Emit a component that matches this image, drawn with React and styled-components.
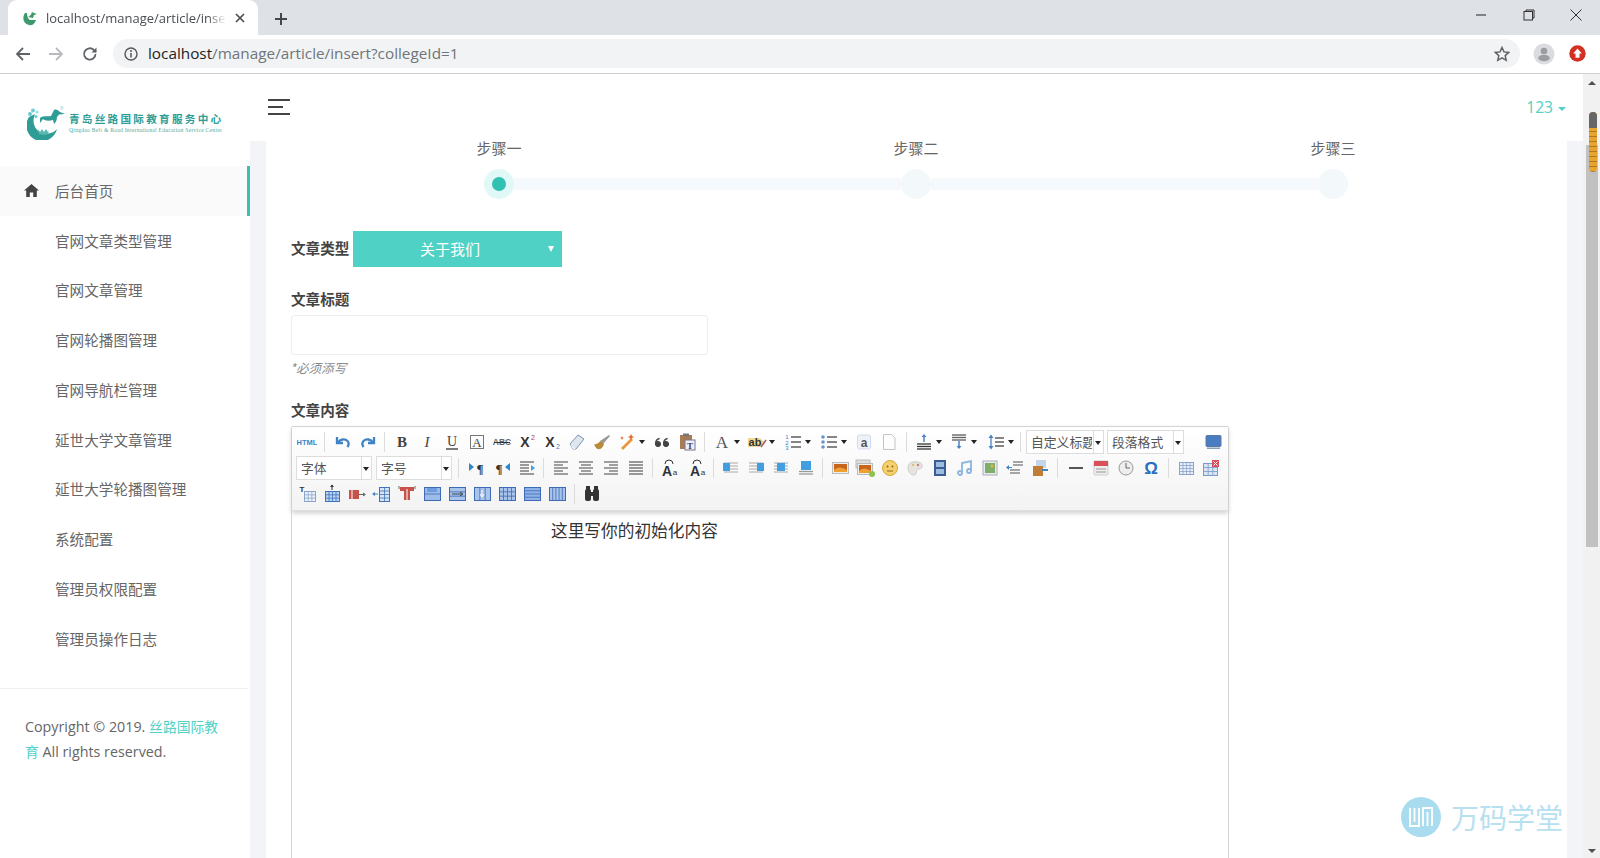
import React from "react";
import styled, { createGlobalStyle } from "styled-components";

const CJK = `"Noto Sans CJK SC", "Noto Sans", sans-serif`;
const LATIN = `"Open Sans", "Noto Sans CJK SC", sans-serif`;

const Global = createGlobalStyle`
  html, body { margin: 0; padding: 0; height: 858px; overflow: hidden; background: #fff; }
  * { box-sizing: border-box; }
`;

const Shell = styled.div`
  width: 1600px; height: 858px; display: flex; flex-direction: column; overflow: hidden;
  font-family: ${CJK}; position: relative; color: #555;
`;

/* ---------- browser chrome ---------- */
const TabStrip = styled.div`
  height: 35px; background: #dee1e6; display: flex; align-items: flex-end; padding-left: 8px; flex: none;
`;
const Tab = styled.div`
  width: 250px; height: 35px; background: #fff; border-radius: 9px 9px 0 0; display: flex; align-items: center;
  padding: 0 0 0 14px; font: 13px ${LATIN}; color: #4a4d52;
`;
const TabTitle = styled.div`
  margin-left: 8px; width: 180px; height: 20px; line-height: 20px; overflow: hidden; white-space: nowrap;
  -webkit-mask-image: linear-gradient(90deg, #000 90%, transparent 100%);
`;
const TabClose = styled.div`margin-left: 8px; display: flex;`;
const NewTab = styled.div`margin: 0 0 9px 16px; display: flex;`;
const WindowBtns = styled.div`
  margin-left: auto; align-self: flex-start; display: flex; height: 30px; align-items: center; padding-right: 0;
`;
const WinBtn = styled.div`width: 47.5px; display: flex; justify-content: center;`;

const NavBar = styled.div`
  height: 39px; background: #fff; border-bottom: 1px solid #cfcfcf; display: flex; align-items: center; padding: 0 0 1px 6px; flex: none;
`;
const NavBtn = styled.div`width: 33.5px; display: flex; justify-content: center;`;
const Omnibox = styled.div`
  width: 1407px; height: 29px; margin-left: 6.5px; border-radius: 15px; background: #f1f3f4; display: flex; align-items: center;
  padding: 0 10px 0 11px; font: 15.3px ${LATIN}; color: #70757a;
`;
const UrlHost = styled.span`color: #222;`;
const UrlText = styled.div`margin-left: 10px; flex: 1; white-space: nowrap; padding-bottom: 2px;`;
const Avatar = styled.div`margin-left: 13px; display: flex;`;
const Ext = styled.div`margin-left: 14px; display: flex;`;

/* ---------- page ---------- */
const Page = styled.div`flex: 1; display: flex; min-height: 0;`;
const Sidebar = styled.aside`
  width: 250px; flex: none; background: #fff; display: flex; flex-direction: column;
`;
const LogoBox = styled.div`
  height: 92px; display: flex; align-items: flex-start; padding: 32px 0 0 27px; gap: 4px;
`;
const LogoWords = styled.div`display: flex; flex-direction: column; margin: 6px 0 0 0; width: 153px;`;
const LogoCn = styled.div`
  font: 700 10.6px/14px ${CJK}; letter-spacing: 2.28px; color: #2f9d95; white-space: nowrap;
`;
const LogoEn = styled.div`
  font: 5.6px/8px "Liberation Serif", serif; color: #4fa9a3; white-space: nowrap; letter-spacing: .27px;
`;
const NavList = styled.nav`display: flex; flex-direction: column;`;
const NavItem = styled.div`
  height: 49.75px; display: flex; align-items: center; padding: 0 0 1px ${p => (p.$icon ? 24 : 55)}px; gap: 16px; font-size: 14.6px;
  color: #666; background: ${p => (p.$active ? "#fafafa" : "transparent")};
  border-right: 3px solid ${p => (p.$active ? "#3bc0b0" : "transparent")};
`;
const SideFoot = styled.div`
  margin: 24.5px 2px 0 0; border-top: 1px solid #f0f0f3; padding: 25px 25px 0; font: 14.3px/25px ${LATIN}; color: #666;
`;
const Teal = styled.span`color: #4fd1c5; font-size: 13.8px;`;

const Main = styled.main`flex: 1; display: flex; flex-direction: column; min-width: 0;`;
const Header = styled.header`
  height: 67px; background: #fff; flex: none; display: flex; align-items: center; justify-content: space-between; padding: 0 17px 1px 18px;
`;
const UserMenu = styled.div`
  font: 15.6px ${LATIN}; color: #4fd1c5; display: flex; align-items: center; gap: 5px;
`;
const Caret = styled.i`
  width: 0; height: 0; border: 4px solid transparent; border-top-color: currentColor; border-bottom: 0; display: block; margin-top: 3px;
`;
const Gutter = styled.div`
  flex: 1; background: #f3f4f8; padding: 0 16px; min-height: 0; overflow: hidden;
`;
const Card = styled.div`
  background: #fff; height: 100%; padding: 0 25px; overflow: hidden;
`;
const Steps = styled.div`
  display: grid; grid-template-columns: 30px 387px 30px 387px 30px; row-gap: 14px; margin-left: 193px; align-items: center;
`;
const StepLabel = styled.div`
  grid-column: ${p => p.$col}; justify-self: center; white-space: nowrap; font-size: 15px; line-height: 14px; color: #666;
`;
const Dot = styled.div`
  width: 30px; height: 30px; border-radius: 50%; background: ${p => (p.$on ? "#e0f8f6" : "#f3f8fb")};
  display: flex; align-items: center; justify-content: center; grid-row: 2;
  &::after { content: ""; width: 14px; height: 14px; border-radius: 50%; background: ${p => (p.$on ? "#2fc1b1" : "transparent")}; }
`;
const Seg = styled.div`height: 12px; background: #f5f9fc; grid-row: 2;`;

const TypeRow = styled.div`display: flex; align-items: center; gap: 4px; margin-top: 32px;`;
const Label = styled.div`font-weight: 700; font-size: 14.6px; line-height: 20px; color: #444;`;
const TypeLabel = styled(Label)`padding-bottom: 3px;`;
const Select = styled.div`
  width: 209px; height: 36px; background: #4fd1c5; color: #fff; font-size: 15px; display: flex; align-items: center; justify-content: center;
  padding: 0 16px 2px 0; position: relative;
  &::after { content: ""; position: absolute; right: 8px; top: 15px; border: 3.5px solid transparent; border-top: 6px solid #fff; border-bottom: 0; }
`;
const TitleLabel = styled(Label)`margin-top: 22px;`;
const TextBox = styled.div`
  width: 417px; height: 40px; margin-top: 6px; border: 1px solid #eee; border-radius: 3px;
`;
const Hint = styled.div`font-size: 12.6px; font-style: italic; color: #8a8a8a; line-height: 18px; margin: 4px 0 0 -1px;`;
const ContentLabel = styled(Label)`margin-top: 23px;`;

const Editor = styled.div`
  width: 938px; margin-top: 6px; border: 1px solid #d4d4d4; border-radius: 2px 2px 0 0; height: 500px;
`;
const Toolbar = styled.div`
  height: 84px; padding: 2px 0 0 2px; background: linear-gradient(#ffffff, #f3f3f3);
  border-bottom: 1px solid #dfdfdf; box-shadow: 0 2px 5px #ccc; display: flex; flex-direction: column;
`;
const ToolRow = styled.div`height: 26px; display: flex; align-items: center; flex: none;`;
const ToolBtn = styled.div`
  width: ${p => (p.$arrow ? 35 : 25)}px; height: 22px; flex: none; display: flex; align-items: center; padding-left: 2.5px; position: relative;
`;
const ToolArrow = styled.i`
  position: absolute; left: 25px; top: 9px; border: 3px solid transparent; border-top: 4px solid #222; border-bottom: 0; display: block;
`;
const ToolSep = styled.div`
  width: ${p => p.$w}px; flex: none; height: 20px; display: flex; justify-content: center;
  &::after { content: ""; width: 1px; height: 100%; background: #dcdcdc; }
`;
const ToolSelect = styled.div`
  width: ${p => p.$w}px; margin-left: ${p => p.$ml}px; height: 24px; flex: none; border: 1px solid #ddd; background: #fff; font-size: 12.8px; color: #555;
  display: flex; align-items: center; padding: 0 11px 1px 4px; position: relative; white-space: nowrap;
  &::after { content: ""; position: absolute; right: 2px; top: 10px; border: 3px solid transparent; border-top: 4px solid #222; border-bottom: 0; }
  &::before { content: ""; position: absolute; right: 9px; top: 0; bottom: 0; width: 1px; background: #ddd; }
`;
const ToolSelectText = styled.span`display: block; overflow: hidden; width: 100%;`;
const Spacer = styled.div`width: ${p => p.$w}px; flex: none;`;
const EditorBody = styled.div`
  padding: 7px 0 0 259px; font-size: 16.7px; line-height: 24px; color: #333;
`;

const ScrollBar = styled.div`
  width: 17px; flex: none; background: #f1f1f1; display: flex; flex-direction: column; align-items: center; position: relative;
`;
const ScrollThumb = styled.div`width: 12px; height: 402px; margin-top: 60px; background: #c1c1c1;`;
const ArrowUp = styled.i`
  display: block; margin-top: 7px; border: 4px solid transparent; border-bottom: 4px solid #505050; border-top: 0; height: 0; width: 0;
`;
const ArrowDown = styled.i`
  display: block; margin-top: auto; margin-bottom: 5px; border: 4px solid transparent; border-top: 4px solid #505050; border-bottom: 0; height: 0; width: 0;
`;
const ScrollMark = styled.div`
  position: absolute; left: 6px; top: 38px; width: 8px; height: 60px; border-radius: 4px; overflow: hidden;
  background: repeating-linear-gradient(#e9a42f 0 4px, #a8782d 4px 5px);
  &::before { content: ""; display: block; height: 16px; background: #666; }
`;
const Watermark = styled.div`
  position: absolute; left: 1401px; top: 797px; display: flex; align-items: center; gap: 10px;
  font-size: 28px; line-height: 40px; color: #b7e1f0; pointer-events: none;
`;

/* ---------- icons ---------- */
const Svg = ({ s = 20, children, vb }) => (
  <svg width={s} height={s} viewBox={vb || `0 0 ${s} ${s}`} fill="none" style={{ display: "block" }}>{children}</svg>
);
const Txt = ({ x = 10, y = 15, size = 14, f = "Liberation Serif", w = "400", c = "#444", st, d }) => (
  <text x={x} y={y} fontSize={size} fontFamily={f} fontWeight={w} fill={c} fontStyle={st} textAnchor="middle">{d}</text>
);
const Lines = ({ ys, x1 = 3, x2 = 17, c = "#777", w = 1.3 }) => ys.map((y, i) => {
  const a = Array.isArray(x1) ? x1[i] : x1;
  const z = Array.isArray(x2) ? x2[i] : x2;
  return <path key={i} d={`M${a} ${y}H${z}`} stroke={c} strokeWidth={w} />;
});
const Grid = ({ x = 3, y = 4, w = 14, h = 12, r = 3, c = 4, fill = "#cfdff5", line = "#5d88c6", children }) => (
  <g>
    <rect x={x + .5} y={y + .5} width={w} height={h} fill={fill} stroke={line} />
    {Array.from({ length: r - 1 }, (_, i) => <path key={"r" + i} d={`M${x} ${y + .5 + (h * (i + 1)) / r}H${x + w}`} stroke={line} strokeWidth=".8" />)}
    {Array.from({ length: c - 1 }, (_, i) => <path key={"c" + i} d={`M${x + .5 + (w * (i + 1)) / c} ${y}V${y + h}`} stroke={line} strokeWidth=".8" />)}
    {children}
  </g>
);
const Photo = ({ x = 3, y = 5, w = 15, h = 10 }) => (
  <g>
    <rect x={x - .5} y={y - .5} width={w + 1} height={h + 1} fill="#eee" stroke="#bbb" />
    <rect x={x + 1} y={y + 1} width={w - 2} height={h - 2} fill="#c8641c" />
    <path d={`M${x + 1} ${y + h - 3}q${w / 3} -5 ${w - 2} 0v2h-${w - 2}z`} fill="#f0a030" />
  </g>
);
const Wrap = ({ x, bw = 7 }) => (
  <g>
    <Lines ys={[5, 8, 11, 14]} x1={3} x2={17} c="#aaa" w="1" />
    <rect x={x} y={5} width={bw} height={8} fill="#3f9fe0" />
  </g>
);
const Blue = "#3f83c6";

const ICONS = {
  html: <Txt y={13} size={7.5} f="Liberation Sans" w="700" c="#3f83c6" d="HTML" />,
  undo: <g stroke={Blue} strokeWidth="2.3"><path d="M4 5v6h6" /><path d="M5 10.5C7 7 12 6.5 14.5 9c1.5 1.6 1.3 4 0 6" /></g>,
  redo: <g stroke={Blue} strokeWidth="2.3"><path d="M16 5v6h-6" /><path d="M15 10.5C13 7 8 6.5 5.5 9 4 10.6 4.2 13 5.5 15" /></g>,
  bold: <Txt w="700" size={15} d="B" />,
  italic: <Txt size={15} st="italic" d="I" />,
  underline: <g><Txt size={14} y={14} d="U" /><path d="M4 17h12" stroke="#333" strokeWidth="1.3" /></g>,
  border: <g><rect x="3.5" y="3.5" width="13" height="13" stroke="#777" /><Txt size={13} y={15} d="A" /></g>,
  strike: <g><Txt size={8.5} y={13} f="Liberation Sans" w="700" c="#666" d="ABC" /><path d="M2 10.5h16" stroke="#333" /></g>,
  sup: <g><Txt x={8} size={14} f="Liberation Sans" w="700" c="#333" d="X" /><Txt x={16} y={8} size={7} f="Liberation Sans" c="#c04040" d="2" /></g>,
  sub: <g><Txt x={8} size={14} f="Liberation Sans" w="700" c="#333" d="X" /><Txt x={16} y={17} size={7} f="Liberation Sans" c={Blue} d="2" /></g>,
  eraser: <g><path d="M3 12l8-9 6 4-8 10H6z" fill="#dfe6ee" stroke="#7a94b5" /><path d="M3 12l4 3.5 2 1.5H6z" fill="#f0f4f8" /></g>,
  brush: <g><path d="M8 9l9-6 1 1-7 8z" fill="#999" /><path d="M2 12c3 1 5-2 7-3l3 3c-1 3-3 6-6 5-2 0-3-3-4-5z" fill="#b88a3c" /></g>,
  wand: <g><path d="M4 16L14 6l2 2L6 18z" fill="#e9973c" /><path d="M14 2l1 2 2 1-2 1-1 2-1-2-2-1 2-1zM5 4l.7 1.5L7 6l-1.3.6L5 8l-.7-1.4L3 6l1.3-.5z" fill="#e06c2c" /></g>,
  quote: <g fill="#444" stroke="#444"><circle cx="6" cy="12" r="2.6" /><circle cx="14" cy="12" r="2.6" /><path d="M3.6 12c0-3 1.4-5 4-5.5M11.6 12c0-3 1.4-5 4-5.5" fill="none" strokeWidth="1.4" /></g>,
  paste: <g><rect x="3" y="3" width="12" height="14" fill="#a87b52" /><rect x="6" y="1.5" width="6" height="3" fill="#777" /><rect x="8" y="8" width="10" height="10" fill="#eef" stroke="#778" /><Txt x={13} y={16.5} size={9} w="700" d="T" /></g>,
  color: <Txt y={16} size={17} c="#555" d="A" />,
  bg: <g><path d="M1 6h12l4 4-4 5H1z" fill="#f2d892" /><Txt x={8} y={14} size={11} f="Liberation Sans" c="#333" w="700" d="ab" /><path d="M14 15l5-7" stroke="#a56" strokeWidth="1.5" /></g>,
  ol: <g><Txt x={4} y={7} size={6} f="Liberation Sans" c={Blue} d="1" /><Txt x={4} y={12.5} size={6} f="Liberation Sans" c={Blue} d="2" /><Txt x={4} y={18} size={6} f="Liberation Sans" c={Blue} d="3" /><Lines ys={[5, 10, 15]} x1={8} x2={18} c="#444" /></g>,
  ul: <g><circle cx="4" cy="5" r="1.8" fill="#6c93cc" /><circle cx="4" cy="10" r="1.8" fill="#6c93cc" /><circle cx="4" cy="15" r="1.8" fill="#6c93cc" /><Lines ys={[5, 10, 15]} x1={8} x2={18} c="#444" /></g>,
  anchor: <g><rect x="3.5" y="3" width="13" height="14" rx="2" fill="#edf1f8" stroke="#d3dcec" /><Txt y={14.5} size={12} f="Liberation Sans" w="700" c="#555" d="a" /></g>,
  page: <path d="M4.5 2.5h8l3.5 3.5v11.5H4.5z" fill="#fdfdfd" stroke="#c4c4c4" />,
  rowspace: <g><Lines ys={[12, 14.5, 17]} x1={3} x2={17} c="#333" /><path d="M10 3v7" stroke="#4b82c3" strokeWidth="1.5" /><path d="M7.5 5L10 2l2.5 3z" fill="#4b82c3" /></g>,
  rowbot: <g><Lines ys={[3, 5.5, 8]} x1={3} x2={17} c="#666" w="1.4" /><path d="M10 9v7" stroke="#4b82c3" strokeWidth="1.5" /><path d="M7.5 14l2.5 3 2.5-3z" fill="#4b82c3" /></g>,
  lh: <g><Lines ys={[6, 10, 14]} x1={9} x2={18} c="#444" /><path d="M5 4v12" stroke="#4b82c3" strokeWidth="1.3" /><path d="M2.5 6L5 2.5 7.5 6zM2.5 14L5 17.5 7.5 14z" fill="#4b82c3" /></g>,
  preview: <g><rect x="3" y="3.5" width="15" height="11" rx="1" fill="#4a7cc0" stroke="#5a7ba5" /><path d="M4 15.5h13v1.5H4z" fill="#8aa0bd" /></g>,
  ltr: <g><path d="M2 5l5 4-5 4z" fill="#2e86cf" /><Txt x={13} y={15} size={13} w="700" c="#333" d="¶" /></g>,
  rtl: <g><Txt x={7} y={15} size={13} w="700" c="#333" d="¶" /><path d="M18 5l-5 4 5 4z" fill="#2e86cf" /></g>,
  indent: <g><Lines ys={[4, 7, 10, 13, 16]} x1={3} x2={[17, 12, 12, 12, 17]} c="#666" /><path d="M14 7l4 3-4 3z" fill="#3f9fe0" /></g>,
  left: <Lines ys={[4, 7, 10, 13, 16]} x1={3} x2={[17, 12, 17, 12, 17]} c="#777" w="1.4" />,
  center: <Lines ys={[4, 7, 10, 13, 16]} x1={[3, 5, 3, 5, 3]} x2={[17, 15, 17, 15, 17]} c="#777" w="1.4" />,
  right: <Lines ys={[4, 7, 10, 13, 16]} x1={[3, 8, 3, 8, 3]} x2={17} c="#777" w="1.4" />,
  justify: <Lines ys={[4, 7, 10, 13, 16]} x1={3} x2={17} c="#777" w="1.5" />,
  toUpper: <g><Txt x={8} y={18} size={14} f="Liberation Sans" w="700" c="#333" d="A" /><Txt x={16} y={17} size={8} f="Liberation Sans" c="#333" d="a" /><path d="M6 6a4 4 0 018 0" stroke="#333" /></g>,
  img1: <Wrap x={2} bw={7} />,
  img2: <Wrap x={11} bw={7} />,
  img3: <Wrap x={6} bw={8} />,
  img4: <g><rect x="5" y="3" width="10" height="9" fill="#3f9fe0" /><Lines ys={[13.5, 16]} c="#999" /></g>,
  image: <Photo />,
  images: <g><rect x="1" y="2" width="14" height="8" fill="#ddd" stroke="#bbb" /><Photo x={3} y={6} w={14} h={10} /><circle cx="17" cy="16" r="3" fill="#8bc34a" /></g>,
  emoji: <g><circle cx="10" cy="10" r="7.5" fill="#f4cf6b" stroke="#d9a93f" /><circle cx="7.5" cy="8.5" r="1" fill="#8a6a2a" /><circle cx="12.5" cy="8.5" r="1" fill="#8a6a2a" /><path d="M7 13h6" stroke="#8a6a2a" /></g>,
  scrawl: <g><path d="M3 9c0-4 5-6 9-5 4 0 6 3 5 5-1 3-4 1-5 3s0 5-3 5c-4 0-6-4-6-8z" fill="#e6e4dc" stroke="#ccc" /><circle cx="8" cy="7" r="1.2" fill="#d8c27a" /><circle cx="13" cy="7" r="1.2" fill="#c78" /></g>,
  video: <g><rect x="4" y="2" width="12" height="16" fill="#3d5d92" /><rect x="6" y="4" width="8" height="5" fill="#9dbbe0" /><rect x="6" y="11" width="8" height="5" fill="#9dbbe0" /></g>,
  music: <g stroke="#8cb5de" strokeWidth="1.8"><path d="M7 15V5l9-2v10" /><circle cx="5" cy="15" r="2" /><circle cx="14" cy="13" r="2" /></g>,
  attach: <g><rect x="3" y="3" width="14" height="14" fill="#e8ecef" stroke="#aab" /><rect x="5" y="5" width="10" height="10" fill="#7fae6a" /><circle cx="12" cy="8" r="1.5" fill="#e6b93a" /></g>,
  pagebreak: <g><Lines ys={[4, 7]} x1={8} x2={18} c="#777" /><Lines ys={[12, 15]} x1={5} x2={15} c="#777" /><path d="M7 9.5H2" stroke="#3f83c6" /><path d="M4 7L1 9.5 4 12z" fill="#3f83c6" /></g>,
  map: <g><rect x="6" y="2" width="10" height="8" fill="#c4d5ea" /><rect x="3" y="8" width="10" height="10" fill="#c07d35" /><path d="M12 12h6" stroke="#3f83c6" strokeWidth="2" /></g>,
  hr: <path d="M3 10h14" stroke="#555" strokeWidth="2" />,
  date: <g><rect x="3" y="3" width="14" height="14" rx="1" fill="#eee" stroke="#ccc" /><path d="M3 3h14v5H3z" fill="#d9505a" /><Lines ys={[11, 14]} x1={5} x2={15} c="#aaa" /></g>,
  time: <g><circle cx="10" cy="10" r="7" fill="#eee" stroke="#999" /><path d="M10 5v5h4" stroke="#666" /></g>,
  omega: <Txt y={16} size={17} f="Liberation Sans" w="700" c="#2a6fc0" d="Ω" />,
  table: <Grid x={3} y={4} w={14} h={12} r={4} c={4} fill="#e9eff8" line="#8aa4cb" />,
  tableDel: <g><Grid x={2} y={5} w={14} h={12} r={3} c={3} fill="#dbe6f5" line="#7a9bcb" /><rect x="11" y="2" width="7" height="7" fill="#d9505a" /><path d="M12.5 3.5l4 4m0-4l-4 4" stroke="#fff" /></g>,
  cellT: <g><Txt x={5} y={8} size={8} f="Liberation Sans" w="700" c="#333" d="T" /><Grid x={7} y={7} w={11} h={10} r={3} c={3} fill="#eef3fa" line="#8aa4cb" /></g>,
  rowUp: <g><Grid x={3} y={7} w={14} h={10} r={3} c={4} fill="#bcd3f0" line="#3f73bd" /><path d="M10 1v5" stroke="#333" /><path d="M8 3l2-2.5L12 3z" fill="#333" /></g>,
  colSplitR: <g><rect x="2" y="6" width="10" height="9" fill="#c6524a" /><path d="M5 6v9" stroke="#fff" /><path d="M12 10.5h5" stroke="#666" /><path d="M16 8.5l3 2-3 2z" fill="#666" /></g>,
  colLeft: <g><path d="M1 10h5" stroke="#3f83c6" /><path d="M3 8l-3 2 3 2z" fill="#3f83c6" /><Grid x={7} y={3} w={10} h={14} r={4} c={2} fill="#d6e4f6" line="#3f73bd" /></g>,
  delRow: <g><path d="M3 3h14v4h-4v9H7V7H3z" fill="#c6524a" /><path d="M10 5v12" stroke="#fff" /><path d="M2 2v3M18 2v3" stroke="#666" /></g>,
  merge1: <Grid x={2} y={3} w={16} h={13} r={2} c={1} fill="#9dbbe8" line="#3f6ab5"><rect x="5" y="4" width="10" height="4" fill="#6d9ce0" /></Grid>,
  merge2: <Grid x={2} y={3} w={16} h={13} r={3} c={1} fill="#a9c4ea" line="#3f6ab5"><path d="M5 10h10M13 8l3 2-3 2" stroke="#345" /></Grid>,
  merge3: <Grid x={2} y={3} w={16} h={13} r={1} c={3} fill="#a9c4ea" line="#3f6ab5"><path d="M10 6v6M8 10l2 3 2-3" stroke="#fff" /></Grid>,
  split1: <Grid x={2} y={3} w={16} h={13} r={3} c={4} fill="#a9c4ea" line="#3f6ab5" />,
  split2: <Grid x={2} y={3} w={16} h={13} r={4} c={1} fill="#8fb2e6" line="#3f6ab5" />,
  split3: <Grid x={2} y={3} w={16} h={13} r={1} c={5} fill="#a9c4ea" line="#3f6ab5" />,
  find: <g fill="#333"><rect x="3" y="5" width="6" height="12" rx="2" /><rect x="11" y="5" width="6" height="12" rx="2" /><rect x="8" y="8" width="4" height="4" /><rect x="4" y="2" width="4" height="4" /><rect x="12" y="2" width="4" height="4" /></g>,
};
ICONS.toLower = ICONS.toUpper;

const b = (i, arrow) => ({ i, arrow });
const sep = w => ({ sep: w });
const sel = (t, w, ml) => ({ t, w, ml });
const sp = w => ({ sp: w });

const ROW1 = [b("html"), sep(11), b("undo"), b("redo"), sep(9), b("bold"), b("italic"), b("underline"), b("border"), b("strike"), b("sup"), b("sub"),
  b("eraser"), b("brush"), b("wand", 1), b("quote"), b("paste"), sep(10), b("color", 1), sp(-1), b("bg", 1), sp(1), b("ol", 1), sp(1), b("ul", 1), b("anchor"), b("page"), sep(10),
  b("rowspace", 1), b("rowbot", 1), sp(2), b("lh", 1), sep(4), sel("自定义标题", 78, 4), sel("段落格式", 77, 3), sp(16), b("preview")];
const ROW2 = [sel("字体", 76, 2), sel("字号", 76, 4), sep(12), b("ltr"), b("rtl"), b("indent"), sep(9), b("left"), b("center"), b("right"), b("justify"), sep(8),
  b("toUpper"), sp(3), b("toLower"), sep(9), b("img1"), b("img2"), b("img3"), b("img4"), sep(9), b("image"), b("images"), b("emoji"), b("scrawl"), b("video"), b("music"), b("attach"), b("pagebreak"), b("map"), sep(11),
  b("hr"), b("date"), b("time"), b("omega"), sep(10), b("table"), b("tableDel")];
const ROW3 = [b("cellT"), b("rowUp"), b("colSplitR"), b("colLeft"), b("delRow"), b("merge1"), b("merge2"), b("merge3"), b("split1"), b("split2"), b("split3"), sep(10), b("find")];

const Row = ({ items }) => (
  <ToolRow>
    {items.map((it, k) => {
      if (it.sep) return <ToolSep key={k} $w={it.sep} />;
      if (it.sp !== undefined) return <Spacer key={k} $w={it.sp} />;
      if (it.t) return <ToolSelect key={k} $w={it.w} $ml={it.ml}><ToolSelectText>{it.t}</ToolSelectText></ToolSelect>;
      return (
        <ToolBtn key={k} $arrow={it.arrow}>
          <Svg>{ICONS[it.i]}</Svg>
          {it.arrow && <ToolArrow />}
        </ToolBtn>
      );
    })}
  </ToolRow>
);

const MENU = ["官网文章类型管理", "官网文章管理", "官网轮播图管理", "官网导航栏管理", "延世大学文章管理", "延世大学轮播图管理", "系统配置", "管理员权限配置", "管理员操作日志"];

const LogoMark = () => (
  <svg width="38" height="34" viewBox="0 0 38 34" style={{ display: "block", flex: "none" }}>
    <path d="M2 11A15.5 15.5 0 1 0 30 23C25 29 13 30 8 21 6 17 6 13 8 8z" fill="#2f9d95" />
    <path d="M13 12c4-3 8-1 11-2l3-6c2-1 4 0 6 2l5 2-6 .5-2 2.5c0 3-1 5-3 7l-1-4c-4 1-8 1-10-1l-3 4z" fill="#2f9d95" />
    <circle cx="3" cy="8" r="2" fill="#6cc" /><circle cx="6" cy="4.5" r="2" fill="#7cc" /><circle cx="10" cy="6" r="1.5" fill="#9dd" /><circle cx="9" cy="10.5" r="1.5" fill="#6cc" />
    <path d="M11 23l2 3 2-3 2 3 2-3 2 3 1-2-1 4-4 1-5-1z" fill="#5ab8b0" />
    <text x="33" y="4" fontSize="4.5" fontFamily="Liberation Sans" fill="#7bb">®</text>
  </svg>
);
const Favicon = () => (
  <svg width="16" height="16" viewBox="0 0 16 16" style={{ display: "block", flex: "none" }}>
    <path d="M3 3C0 7 1 14 7 15c4 1 6-2 7-5H8C6 9 5 6 5 3z" fill="#3f9a6b" />
    <path d="M6 7c2-1 3-2 4-5l2 1 3 1-3 1-1 3z" fill="#3f9a6b" />
  </svg>
);

export default function App() {
  return (
    <Shell>
      <Global />
      <TabStrip>
        <Tab>
          <Favicon />
          <TabTitle>localhost/manage/article/insert?collegeId=1</TabTitle>
          <TabClose>
            <svg width="12" height="12" viewBox="0 0 12 12"><path d="M2 2l8 8M10 2l-8 8" stroke="#4a4d52" strokeWidth="1.7" /></svg>
          </TabClose>
        </Tab>
        <NewTab>
          <svg width="14" height="14" viewBox="0 0 14 14"><path d="M7 1v12M1 7h12" stroke="#44474c" strokeWidth="2" /></svg>
        </NewTab>
        <WindowBtns>
          <WinBtn><svg width="12" height="12" viewBox="0 0 12 12"><path d="M1 6h10" stroke="#222" /></svg></WinBtn>
          <WinBtn><svg width="12" height="12" viewBox="0 0 12 12"><rect x="1" y="2.5" width="8.5" height="8.5" fill="none" stroke="#333" /><path d="M3 2.5V1h8v8h-1.5" fill="none" stroke="#333" /></svg></WinBtn>
          <WinBtn><svg width="14" height="14" viewBox="0 0 14 14"><path d="M1.5 1.5l11 11M12.5 1.5l-11 11" stroke="#333" /></svg></WinBtn>
        </WindowBtns>
      </TabStrip>
      <NavBar>
        <NavBtn><svg width="16" height="16" viewBox="0 0 16 16"><path d="M15 8H2M8 2L2 8l6 6" fill="none" stroke="#5f6368" strokeWidth="1.8" /></svg></NavBtn>
        <NavBtn><svg width="16" height="16" viewBox="0 0 16 16"><path d="M1 8h13M8 2l6 6-6 6" fill="none" stroke="#b8babd" strokeWidth="1.8" /></svg></NavBtn>
        <NavBtn><svg width="16" height="16" viewBox="0 0 16 16"><path d="M13.5 8a5.7 5.7 0 11-1.6-4L14 6" fill="none" stroke="#5f6368" strokeWidth="1.8" /><path d="M14.5 1.5v5h-5z" fill="#5f6368" /></svg></NavBtn>
        <Omnibox>
          <svg width="14" height="14" viewBox="0 0 14 14"><circle cx="7" cy="7" r="6" fill="none" stroke="#55585c" strokeWidth="1.4" /><path d="M7 6v4.5" stroke="#55585c" strokeWidth="1.5" /><circle cx="7" cy="4" r="1" fill="#55585c" /></svg>
          <UrlText><UrlHost>localhost</UrlHost>/manage/article/insert?collegeId=1</UrlText>
          <svg width="16" height="16" viewBox="0 0 16 16"><path d="M8 1.5l2 4.4 4.8.5-3.6 3.2 1 4.7L8 11.9l-4.2 2.4 1-4.7L1.2 6.4 6 5.9z" fill="none" stroke="#5f6368" strokeWidth="1.5" /></svg>
        </Omnibox>
        <Avatar>
          <svg width="22" height="22" viewBox="0 0 22 22"><circle cx="11" cy="11" r="10.5" fill="#dadce0" /><circle cx="11" cy="8" r="3.3" fill="#9b9da0" /><ellipse cx="11" cy="15" rx="5.8" ry="3.2" fill="#9b9da0" /></svg>
        </Avatar>
        <Ext>
          <svg width="17" height="17" viewBox="0 0 17 17"><circle cx="8.5" cy="8.5" r="8.2" fill="#d32f22" /><path d="M8.5 3.5l4.3 5H10.5v4.2h-4V8.5H4.2z" fill="#fff" /></svg>
        </Ext>
      </NavBar>
      <Page>
        <Sidebar>
          <LogoBox>
            <LogoMark />
            <LogoWords>
              <LogoCn>青岛丝路国际教育服务中心</LogoCn>
              <LogoEn>Qingdao Belt &amp; Road International Education Service Center</LogoEn>
            </LogoWords>
          </LogoBox>
          <NavList>
            <NavItem $active $icon>
              <svg width="15" height="13" viewBox="0 0 15 13"><path d="M7.5 0L0 6.6h2.2V13h3.6V8.6h3.4V13h3.6V6.6H15z" fill="#444" /></svg>
              后台首页
            </NavItem>
            {MENU.map(m => <NavItem key={m}>{m}</NavItem>)}
          </NavList>
          <SideFoot>Copyright © 2019. <Teal>丝路国际教育</Teal> All rights reserved.</SideFoot>
        </Sidebar>
        <Main>
          <Header>
            <svg width="22" height="16" viewBox="0 0 22 16"><path d="M0 1h22M0 8h15M0 15h22" stroke="#444" strokeWidth="2" /></svg>
            <UserMenu>123 <Caret /></UserMenu>
          </Header>
          <Gutter>
            <Card>
              <Steps>
                <StepLabel $col={1}>步骤一</StepLabel>
                <StepLabel $col={3}>步骤二</StepLabel>
                <StepLabel $col={5}>步骤三</StepLabel>
                <Dot $on /><Seg /><Dot /><Seg /><Dot />
              </Steps>
              <TypeRow>
                <TypeLabel>文章类型</TypeLabel>
                <Select>关于我们</Select>
              </TypeRow>
              <TitleLabel>文章标题</TitleLabel>
              <TextBox />
              <Hint>*必须添写</Hint>
              <ContentLabel>文章内容</ContentLabel>
              <Editor>
                <Toolbar>
                  <Row items={ROW1} />
                  <Row items={ROW2} />
                  <Row items={ROW3} />
                </Toolbar>
                <EditorBody>这里写你的初始化内容</EditorBody>
              </Editor>
            </Card>
          </Gutter>
        </Main>
        <ScrollBar>
          <ArrowUp />
          <ScrollThumb />
          <ScrollMark />
          <ArrowDown />
        </ScrollBar>
      </Page>
      <Watermark>
        <svg width="40" height="40" viewBox="0 0 40 40" style={{ display: "block" }}>
          <circle cx="20" cy="20" r="20" fill="#a9dcef" />
          <path d="M9 11v18h9V11M13.5 11v14M22 29V11h9v18M26.5 29V15" fill="none" stroke="#fff" strokeWidth="1.8" />
        </svg>
        万码学堂
      </Watermark>
    </Shell>
  );
}
